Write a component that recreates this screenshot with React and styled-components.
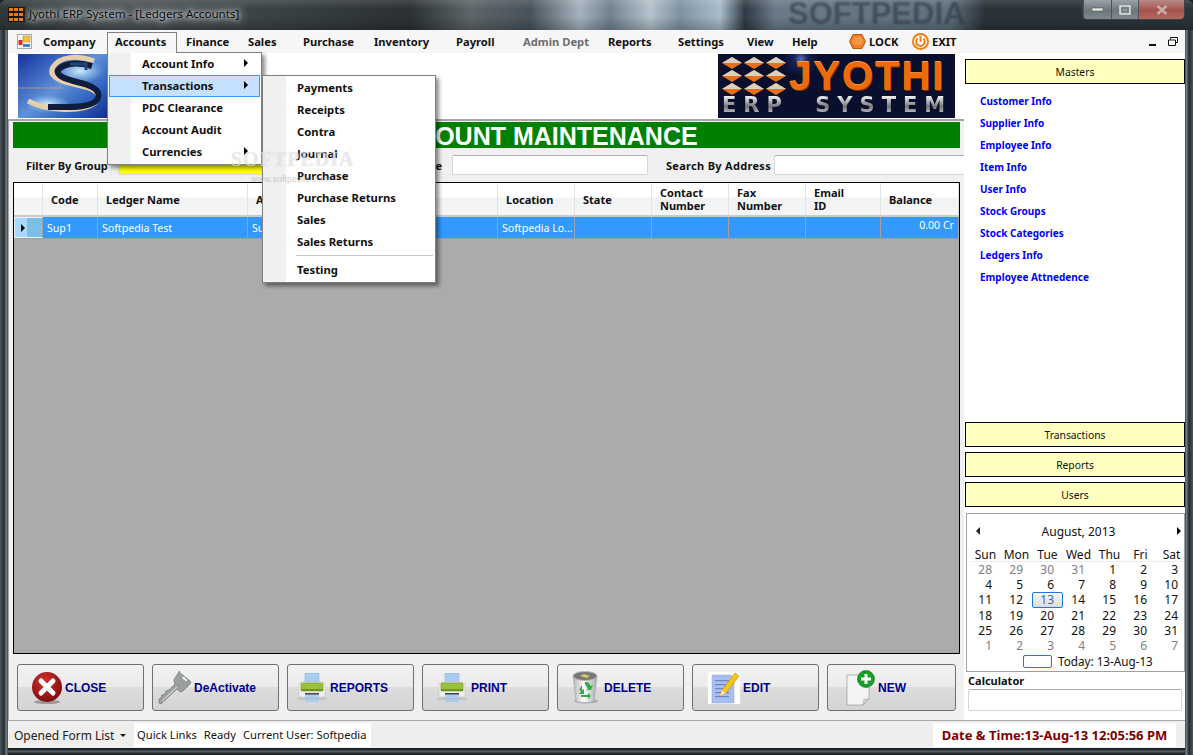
import React from 'react';
import styled, { createGlobalStyle } from 'styled-components';

const GlobalStyle = createGlobalStyle`
    html, body { margin: 0; padding: 0; background: #1c2226; }
    * { box-sizing: border-box; }
`;

const UI = '"Noto Sans", "Open Sans", sans-serif';
const BOLD = '"Noto Sans", "DejaVu Sans", sans-serif';

const Win = styled.div`
    position: relative;
    width: 1193px;
    height: 755px;
    overflow: hidden;
    display: flex;
    flex-direction: column;
    background: linear-gradient(90deg, #4c565c 0, #242b2f 4px, #7d8a90 7px, #20262a 8px, #20262a 1185px, #7d8a90 1186px, #242b2f 1189px, #4c565c 1193px);
    border-radius: 6px 6px 0 0;
`;

const BottomFrame = styled.div`
    position: absolute;
    left: 8px;
    right: 8px;
    bottom: 0;
    height: 7px;
    background: linear-gradient(180deg, #1a1f22 0, #20262a 2px, #5d6b72 3px, #2c3438 5px, #14181a 7px);
`;

const TitleBar = styled.div`
    height: 30px;
    flex: none;
    display: flex;
    align-items: flex-start;
    padding-left: 8px;
    background:
        linear-gradient(180deg, rgba(255,255,255,0.12) 0, rgba(255,255,255,0) 30%, rgba(0,0,0,0) 55%, rgba(0,0,0,0.22) 100%),
        linear-gradient(90deg, #2e3638 0, #4a5154 120px, #3d4447 250px, #2a3034 410px, #5e6569 470px, #48525a 530px, #a5b3bf 580px, #71818e 610px, #b4c2cc 650px, #7f92a2 680px, #a8bccc 720px, #2e3a44 745px, #6a7a88 775px, #60707c 950px, #2a3238 985px, #2c3439 1193px);
`;

const AppIconSvg = styled.svg`
    margin-top: 7px;
    flex: none;
`;

const TitleText = styled.span`
    margin: 6px 0 0 4px;
    font: 11.6px ${UI};
    color: #0c0e10;
    text-shadow: 0 0 5px rgba(255,255,255,0.95), 0 0 9px rgba(255,255,255,0.85), 0 0 14px rgba(255,255,255,0.7);
`;

const WinButtons = styled.div`
    margin-left: auto;
    margin-right: 8px;
    display: flex;
    height: 20px;
    border: 1px solid #3b4248;
    border-top: none;
    border-radius: 0 0 5px 5px;
    overflow: hidden;
    z-index: 7;
`;

const WinButton = styled.div`
    width: ${p => p.$w}px;
    display: flex;
    align-items: center;
    justify-content: center;
    border-left: 1px solid #4a5157;
    background: ${p => p.$close
        ? 'linear-gradient(180deg, #b58a86, #a6524c 55%, #b26a62)'
        : 'linear-gradient(180deg, #9aa3a8, #6d767c 55%, #7f888c)'};
`;

const Client = styled.div`
    flex: 1;
    margin: 0 8px 7px;
    display: flex;
    flex-direction: column;
    min-height: 0;
    background: #fff;
`;

const MenuBar = styled.div`
    height: 23px;
    flex: none;
    display: flex;
    align-items: center;
    padding-left: 9px;
    background: #f6f6f6;
`;

const MenuLogoSvg = styled.svg`
    flex: none;
    margin-right: 9px;
`;

const MenuItem = styled.div`
    width: ${p => p.$w}px;
    flex: none;
    display: flex;
    align-items: center;
    gap: 3px;
    font: bold 11.2px ${BOLD};
    color: ${p => p.$muted ? '#6d6d6d' : '#111'};
    white-space: nowrap;
`;

const MdiControls = styled.div`
    margin-left: auto;
    margin-right: 7px;
    display: flex;
    align-items: center;
    gap: 12px;
`;

const Body = styled.div`
    flex: 1;
    display: flex;
    min-height: 0;
`;

const MainCol = styled.div`
    width: 956px;
    flex: none;
    display: flex;
    flex-direction: column;
`;

const Banner = styled.div`
    height: 66px;
    flex: none;
    display: flex;
    justify-content: space-between;
    align-items: flex-start;
    padding: 1px 9px 0 10px;
    background: #fff;
`;

const SLogo = styled.svg`
    width: 100px;
    height: 64px;
    display: block;
`;

const JyothiLogo = styled.div`
    width: 237px;
    height: 64px;
    display: flex;
    flex-direction: column;
    background: radial-gradient(circle at 83px 5px, #5a70b8 0, #1a2358 7px, #0a0f2e 18px), #0a0f2e;
    overflow: hidden;
`;

const LogoTop = styled.div`
    display: flex;
    align-items: center;
    height: 41px;
    padding: 3px 0 0 4px;
    gap: 1px;
`;

const LogoName = styled.span`
    font: bold 40px/36px "Liberation Sans", sans-serif;
    letter-spacing: 2px;
    color: #ee6a0a;
    text-shadow: 0 -1px 0 #ffa040, 1px 1px 0 #7a3000;
`;

const LogoSub = styled.span`
    font: bold 21px/21px "DejaVu Sans", sans-serif;
    letter-spacing: 7px;
    word-spacing: 12px;
    white-space: nowrap;
    padding-left: 4px;
    background: linear-gradient(180deg, #fff, #777 55%, #ddd);
    -webkit-background-clip: text;
    background-clip: text;
    -webkit-text-fill-color: transparent;
`;

const Panel = styled.div`
    flex: 1;
    display: flex;
    flex-direction: column;
    padding: 1px 4px 9px 4px;
    background: #f0f0f0;
    border-top: 2px solid #a5a5a5;
    border-left: 1px solid #a5a5a5;
`;

const Heading = styled.div`
    height: 26px;
    flex: none;
    display: flex;
    align-items: center;
    padding: 3px 0 0 368px;
    background: #008000;
    color: #fff;
    font: bold 25px "Liberation Sans", sans-serif;
`;

const FilterRow = styled.div`
    height: 34px;
    flex: none;
    display: flex;
    align-items: center;
    margin-right: -4px;
    padding-left: 13px;
    overflow: hidden;
`;

const FilterLabel = styled.span`
    font: bold 11px ${BOLD};
    letter-spacing: ${p => p.$ls || 0}px;
    color: #111;
    white-space: nowrap;
    width: ${p => p.$w}px;
    flex: none;
    text-align: ${p => p.$right ? 'right' : 'left'};
`;

const FilterInput = styled.div`
    width: ${p => p.$w}px;
    height: 20px;
    flex: none;
    margin: 0 ${p => p.$mr || 0}px 0 ${p => p.$ml || 0}px;
    background: ${p => p.$bg || '#fff'};
    border: 1px solid #d5d8dc;
    border-top-color: #abadb3;
    border-radius: 2px;
`;

const Grid = styled.div`
    height: 472px;
    flex: none;
    display: flex;
    flex-direction: column;
    background: #ababab;
    border: 1px solid #000;
`;

const GridHead = styled.div`
    height: 34px;
    flex: none;
    display: flex;
    background: linear-gradient(180deg, #fff 0, #fff 45%, #f1f2f4 46%, #f4f5f7 100%);
    border-bottom: 2px solid #c8cacc;
`;

const HeadCell = styled.div`
    width: ${p => p.$w}px;
    flex: none;
    display: flex;
    align-items: center;
    padding-left: 8px;
    border-right: 1px solid #e2e3e5;
    font: bold 11px/13px ${BOLD};
    color: #111;
    white-space: pre-line;
`;

const GridRow = styled.div`
    height: 22px;
    flex: none;
    display: flex;
    background: #3399ff;
    border-bottom: 1px solid #a0a0a0;
`;

const RowCell = styled.div`
    width: ${p => p.$w}px;
    flex: none;
    display: flex;
    align-items: ${p => p.$right ? 'flex-start' : 'center'};
    justify-content: ${p => p.$right ? 'flex-end' : 'flex-start'};
    padding: ${p => p.$right ? '1px 4px 0 0' : '0 0 0 4px'};
    border-right: 1px solid #a0a0a0;
    font: 10.6px ${UI};
    color: #fff;
    white-space: nowrap;
    overflow: hidden;
`;

const RowHeader = styled.div`
    width: 29px;
    flex: none;
    display: flex;
    align-items: center;
    padding-left: 6px;
    background: linear-gradient(90deg, #a8d8f8 0, #a8d8f8 45%, #78c0e8 46%, #78c0e8 100%);
    border: 1px solid #e8f4fc;
    border-right: 1px solid #a0a0a0;
`;

const Arrow = styled.span`
    width: 0;
    height: 0;
    border-top: ${p => p.$s || 4}px solid transparent;
    border-bottom: ${p => p.$s || 4}px solid transparent;
    border-left: ${p => p.$s || 4}px solid ${p => p.$c || '#000'};
    display: block;
`;

const ArrowLeft = styled(Arrow)`
    border-left: none;
    border-right: 4px solid #222;
`;

const ActionBar = styled.div`
    margin-top: 10px;
    display: flex;
    gap: 8px;
    padding-left: 4px;
`;

const ActionButton = styled.div`
    width: ${p => p.$w || 127}px;
    height: 47px;
    flex: none;
    display: flex;
    align-items: center;
    gap: ${p => p.$gap}px;
    padding-left: ${p => p.$left}px;
    background: linear-gradient(180deg, #f2f2f2 0, #ebebeb 48%, #dddddd 49%, #d3d3d3 100%);
    border: 1px solid #707070;
    border-radius: 3px;
    font: bold 12px "Liberation Sans", sans-serif;
    color: #00008b;
`;

const Side = styled.div`
    width: 221px;
    flex: none;
    display: flex;
    flex-direction: column;
    padding: 6px 0 9px 1px;
    background: #fff;
    overflow: hidden;
`;

const SideButton = styled.div`
    height: 25px;
    flex: none;
    display: flex;
    align-items: center;
    justify-content: center;
    margin-bottom: ${p => p.$mb ?? 5}px;
    background: #ffffc0;
    border: 1px solid #000;
    font: 10.3px ${UI};
    color: #111;
`;

const SideLinks = styled.div`
    flex: 1;
    padding: 6px 0 0 15px;
    display: flex;
    flex-direction: column;
`;

const SideLink = styled.div`
    height: 22px;
    display: flex;
    align-items: center;
    font: bold 10px ${BOLD};
    color: #0000ff;
`;

const Calendar = styled.div`
    height: 159px;
    margin: 1px 0 0 1px;
    flex: none;
    display: flex;
    flex-direction: column;
    border: 1px solid #a0a0a0;
    font: 12px ${UI};
    color: #111;
    overflow: hidden;
`;

const CalHead = styled.div`
    display: flex;
    align-items: center;
    justify-content: space-between;
    height: 20px;
    margin-top: 7px;
    padding: 0 3px 0 9px;
`;

const CalWeek = styled.div`
    display: grid;
    grid-template-columns: repeat(7, 31px);
    margin: 2px 0 0 3px;
    height: 19px;
    padding-top: 3px;
    align-items: center;
    text-align: center;
    border-bottom: 1px solid #eeeeee;
    font-size: 12px;
`;

const CalDays = styled.div`
    display: grid;
    grid-template-columns: repeat(7, 31px);
    grid-auto-rows: 15.2px;
    margin: 0 0 0 3px;
`;

const CalDay = styled.div`
    display: flex;
    align-items: center;
    justify-content: flex-end;
    padding-right: ${p => p.$sel ? '8px' : '9px'};
    line-height: 15px;
    color: ${p => p.$sel ? '#3a6ea5' : p.$off ? '#808080' : '#111'};
    ${p => p.$sel && `
        background: linear-gradient(180deg, #f8f8f8, #dcdcdc);
        border: 1px solid #1a78e0;
        border-radius: 2px;
    `}
`;

const CalToday = styled.div`
    display: flex;
    align-items: center;
    gap: 6px;
    margin: 0 0 0 56px;
    font-size: 11.7px;
`;

const TodayBox = styled.span`
    width: 29px;
    height: 13px;
    border: 1px solid #1a78e0;
    border-radius: 2px;
`;

const CalcLabel = styled.div`
    margin: 2px 0 1px 3px;
    font: bold 11px/14px ${BOLD};
    color: #111;
`;

const CalcInput = styled.div`
    height: 22px;
    margin: 0 3px;
    flex: none;
    border: 1px solid #d5d8dc;
    border-top-color: #abadb3;
    border-radius: 2px;
`;

const StatusBar = styled.div`
    height: 28px;
    flex: none;
    display: flex;
    align-items: center;
    background: #f0eded;
    border-top: 1px solid #a8a8a8;
`;

const FormList = styled.div`
    width: 126px;
    flex: none;
    display: flex;
    align-items: center;
    gap: 6px;
    padding: 2px 0 0 6px;
    font: 12px ${UI};
    color: #222;
    white-space: nowrap;
`;

const CaretDown = styled.span`
    width: 0;
    height: 0;
    border-left: 3px solid transparent;
    border-right: 3px solid transparent;
    border-top: 3px solid #111;
`;

const StatusLinks = styled.div`
    height: 24px;
    display: flex;
    align-items: center;
    gap: 7px;
    padding: 0 4px 0 3px;
    background: #fff;
    font: 11.2px ${UI};
    color: #111;
    white-space: nowrap;
`;

const DateBox = styled.div`
    margin-left: auto;
    margin-right: 9px;
    width: 243px;
    height: 24px;
    display: flex;
    align-items: center;
    justify-content: center;
    background: #fff;
    font: bold 13px ${BOLD};
    color: #800000;
    white-space: nowrap;
`;

const Dropdown = styled.div`
    position: absolute;
    left: ${p => p.$x}px;
    top: ${p => p.$y}px;
    width: ${p => p.$w}px;
    height: ${p => p.$h}px;
    padding: ${p => p.$pt}px 1px 0;
    background: linear-gradient(90deg, #f0f0f0 0, #f0f0f0 ${p => p.$gutter - 2}px, #fff ${p => p.$gutter}px);
    border: 1px solid #808080;
    box-shadow: 3px 3px 4px rgba(0, 0, 0, 0.45);
    z-index: ${p => p.$z};
`;

const DropItem = styled.div`
    height: 22px;
    display: flex;
    align-items: center;
    justify-content: space-between;
    padding: 0 11px 2px 32px;
    font: bold 11.3px ${BOLD};
    color: #111;
    border: 1px solid ${p => p.$active ? '#3399ff' : 'transparent'};
    background: ${p => p.$active ? '#c4e0fc' : 'transparent'};
`;

const DropSep = styled.div`
    height: 1px;
    margin: 2px 1px 3px 32px;
    background: #c8c8c8;
`;

const ActiveTab = styled.div`
    position: absolute;
    left: 107px;
    top: 32px;
    width: 70px;
    height: 21px;
    display: flex;
    align-items: center;
    padding: 0 0 3px 7px;
    background: #f6f6f6;
    border: 1px solid #808080;
    border-bottom: none;
    font: bold 11.2px ${BOLD};
    color: #111;
    z-index: 4;
`;

const Watermark = styled.div`
    position: absolute;
    left: ${p => p.$x}px;
    top: ${p => p.$y}px;
    font: ${p => p.$font};
    color: ${p => p.$c};
    letter-spacing: ${p => p.$ls || 0}px;
    text-shadow: ${p => p.$shadow || 'none'};
    filter: ${p => p.$blur ? `blur(${p.$blur}px)` : 'none'};
    white-space: nowrap;
    pointer-events: none;
    z-index: 6;
`;

const menuItems = [
    ['Company', 72], ['Accounts', 71], ['Finance', 62], ['Sales', 55], ['Purchase', 71], ['Inventory', 82],
    ['Payroll', 67], ['Admin Dept', 85, true], ['Reports', 70], ['Settings', 69], ['View', 45], ['Help', 57],
];

const gridCols = [
    ['Code', 55, 'Sup1'], ['Ledger Name', 150, 'Softpedia Test'], ['Account Type', 100, 'Supplier'], ['Address', 150, ''],
    ['Location', 77, 'Softpedia Lo...'], ['State', 77, ''], ['Contact\nNumber', 77, ''], ['Fax\nNumber', 77, ''],
    ['Email\nID', 75, ''],
];

const masterLinks = ['Customer Info', 'Supplier Info', 'Employee Info', 'Item Info', 'User Info', 'Stock Groups', 'Stock Categories', 'Ledgers Info', 'Employee Attnedence'];

const calendarDays = [
    [28, 1], [29, 1], [30, 1], [31, 1], [1], [2], [3],
    [4], [5], [6], [7], [8], [9], [10],
    [11], [12], [13, 0, 1], [14], [15], [16], [17],
    [18], [19], [20], [21], [22], [23], [24],
    [25], [26], [27], [28], [29], [30], [31],
    [1, 1], [2, 1], [3, 1], [4, 1], [5, 1], [6, 1], [7, 1],
];

const AppIcon = () => (
    <AppIconSvg width="17" height="15" viewBox="0 0 17 15">
        <rect width="17" height="15" fill="#1c1410" />
        {[1, 6, 11].map(x => [1, 6, 11].map(y => (
            <rect key={x + '-' + y} x={x} y={y} width="4" height="3" fill="#e9781a" />
        )))}
    </AppIconSvg>
);

const MenuLogo = () => (
    <MenuLogoSvg width="17" height="15" viewBox="0 0 17 15">
        <rect x="0.5" y="0.5" width="14" height="14" fill="#f4f4f4" stroke="#aaa" />
        <rect x="1.5" y="6" width="4" height="5" fill="#e02a20" />
        <rect x="6" y="2" width="7" height="6" fill="#f5c242" stroke="#c08a10" strokeWidth="0.5" />
        <rect x="6" y="10" width="7" height="3" fill="#4a7fd0" />
    </MenuLogoSvg>
);

const LockIcon = () => (
    <svg width="17" height="15" viewBox="0 0 17 15">
        <polygon points="4,0.5 13,0.5 16.5,7.5 13,14.5 4,14.5 0.5,7.5" fill="#ef7d22" stroke="#c4560c" />
        <polygon points="5,3 12,3 14,7 12,11 5,11 3,7" fill="#f79646" />
    </svg>
);

const ExitIcon = () => (
    <svg width="17" height="17" viewBox="0 0 17 17">
        <circle cx="8.5" cy="8.5" r="7.5" fill="#fff" stroke="#ef7d12" strokeWidth="2" />
        <path d="M5.6 5.5a4.3 4.3 0 1 0 5.8 0" fill="none" stroke="#ef7d12" strokeWidth="2" />
        <path d="M8.5 3v6" stroke="#ef7d12" strokeWidth="2" />
    </svg>
);

const CloseIcon = () => (
    <svg width="32" height="34" viewBox="0 0 32 34">
        <defs>
            <radialGradient id="redBall" cx="40%" cy="30%" r="75%">
                <stop offset="0" stopColor="#d0302c" />
                <stop offset="1" stopColor="#7a0c0c" />
            </radialGradient>
        </defs>
        <ellipse cx="16" cy="31" rx="13" ry="2" fill="#999" />
        <circle cx="16" cy="16" r="15" fill="url(#redBall)" />
        <path d="M10 10l12 12M22 10L10 22" stroke="#fff" strokeWidth="5" strokeLinecap="round" />
    </svg>
);

const KeyIcon = () => (
    <svg width="34" height="34" viewBox="0 0 34 34">
        <path d="M21 1l11 9c1 1 1 2 0 3l-7 7c-1 1-3 1-4 0l-2-2L5 31l-2 2-2-1v-4l2-1 1-3 3-1 1-3 3-1 6-6-1-3c0-1 0-2 1-3l4-6c0-1 1-1 1-1z" fill="#9aa09c" stroke="#6f7571" strokeWidth="0.7" />
        <rect x="23" y="6" width="7" height="3" rx="1.5" transform="rotate(42 26 8)" fill="#e8eae8" stroke="#7a7f7b" strokeWidth="0.6" />
        <path d="M19 16L4 30" stroke="#c9cdca" strokeWidth="1.4" />
    </svg>
);

const PrinterIcon = () => (
    <svg width="30" height="30" viewBox="0 0 30 30">
        <rect x="8" y="0" width="14" height="12" fill="#a9cdf2" stroke="#8fb2d8" strokeWidth="0.5" />
        <rect x="2" y="9" width="26" height="15" rx="2" fill="#f0f0ee" stroke="#bbb" strokeWidth="0.5" />
        <rect x="4" y="10" width="22" height="8" rx="1" fill="#9bc23c" stroke="#6f9420" strokeWidth="0.6" />
        <rect x="4" y="16" width="22" height="2" fill="#6f9420" />
        <rect x="8" y="20" width="14" height="9" fill="#a9cdf2" />
        <rect x="8" y="20" width="14" height="1.5" fill="#444" />
        <rect x="0" y="25" width="30" height="1.4" fill="#bbb" />
    </svg>
);

const RecycleIcon = () => (
    <svg width="26" height="33" viewBox="0 0 26 33">
        <defs>
            <linearGradient id="binSide" x1="0" x2="1" y1="0" y2="0">
                <stop offset="0" stopColor="#b4b4b4" />
                <stop offset="0.45" stopColor="#fdfdfd" />
                <stop offset="1" stopColor="#a8a8a8" />
            </linearGradient>
        </defs>
        <ellipse cx="14" cy="30" rx="12" ry="2.4" fill="#aaa" />
        <path d="M1 5l3 25c1 2 17 2 18 0l3-25z" fill="url(#binSide)" stroke="#999" strokeWidth="0.5" />
        <ellipse cx="13" cy="5" rx="12" ry="4.5" fill="#777" stroke="#bbb" />
        <path d="M8 5l4-2 6 2-3 2z" fill="#d8c860" />
        <path d="M13 13l3 5-2 1 5 0 2-5-2 1-3-4h-3zM10 14l-3 5 2 1-2 3h5v-5l-2 1zM9 24h7v-2l3 3-3 3v-2H9z" fill="#35a84a" />
    </svg>
);

const EditIcon = () => (
    <svg width="32" height="32" viewBox="0 0 32 32">
        <rect width="32" height="32" fill="#fff" />
        <path d="M4 3h19l3 3v25H4z" fill="#a8bdf0" stroke="#90a4d8" strokeWidth="0.5" />
        {[8, 12, 16, 20, 24].map(y => <rect key={y} x="7" y={y} width="14" height="1.2" fill="#7085c0" />)}
        <path d="M27 1l4 3-13 17-6 3 2-6z" fill="#f5c518" stroke="#c49200" strokeWidth="0.6" />
        <path d="M12 24l2-6 4 3z" fill="#fbe7b0" />
    </svg>
);

const NewIcon = () => (
    <svg width="30" height="36" viewBox="0 0 30 36">
        <path d="M1 5h22v24l-6 6H1z" fill="#f4f4f4" stroke="#999" strokeWidth="0.7" />
        <path d="M17 35l1-6 5 0z" fill="#d4d4d4" stroke="#999" strokeWidth="0.5" />
        <circle cx="20" cy="9" r="8.5" fill="#16a02a" stroke="#0c6a18" strokeWidth="0.6" />
        <path d="M20 4v10M15 9h10" stroke="#fff" strokeWidth="3" />
    </svg>
);

const actionButtons = [
    ['CLOSE', CloseIcon, 13, 2, 127],
    ['DeActivate', KeyIcon, 5, 2, 127],
    ['REPORTS', PrinterIcon, 9, 3, 127],
    ['PRINT', PrinterIcon, 14, 4, 127],
    ['DELETE', RecycleIcon, 14, 6, 127],
    ['EDIT', EditIcon, 15, 3, 127],
    ['NEW', NewIcon, 18, 2, 129],
];

export default function App () {
    return (
        <Win>
            <GlobalStyle />
            <TitleBar>
                <AppIcon />
                <TitleText>Jyothi ERP System - [Ledgers Accounts]</TitleText>
                <WinButtons>
                    <WinButton $w={28}>
                        <svg width="12" height="5"><rect width="11" height="3" y="1" fill="#e8e8e8" stroke="#444" strokeWidth="0.5" /></svg>
                    </WinButton>
                    <WinButton $w={27}>
                        <svg width="12" height="10"><rect x="1" y="1" width="10" height="8" fill="#8f989c" stroke="#e0e0e0" strokeWidth="1.5" /><rect x="3" y="3" width="6" height="4" fill="none" stroke="#444" strokeWidth="0.5" /></svg>
                    </WinButton>
                    <WinButton $w={46} $close>
                        <svg width="12" height="10"><path d="M1.500 1l9 8M10.500 1l-9 8" stroke="#c9b0aa" strokeWidth="2.400" /></svg>
                    </WinButton>
                </WinButtons>
            </TitleBar>

            <Client>
                <MenuBar>
                    <MenuLogo />
                    {menuItems.map(([label, w, muted]) => (
                        <MenuItem key={label} $w={w} $muted={muted}>{label}</MenuItem>
                    ))}
                    <MenuItem $w={63}><LockIcon />LOCK</MenuItem>
                    <MenuItem $w={60}><ExitIcon />EXIT</MenuItem>
                    <MdiControls>
                        <svg width="7" height="9"><rect y="7" width="7" height="2" fill="#111" /></svg>
                        <svg width="10" height="9"><path d="M2.500 2.500V.5h7v5h-2M.5 3h7v5.500h-7z" fill="#fff" stroke="#111" /></svg>
                    </MdiControls>
                </MenuBar>

                <Body>
                    <MainCol>
                        <Banner>
                            <SLogo viewBox="0 0 100 64">
                                <defs>
                                    <linearGradient id="sBack" x1="0" x2="1" y1="0.1" y2="0.9">
                                        <stop offset="0" stopColor="#1a3aa6" />
                                        <stop offset="0.45" stopColor="#5f92d8" />
                                        <stop offset="0.75" stopColor="#2c5cbc" />
                                        <stop offset="1" stopColor="#12288c" />
                                    </linearGradient>
                                    <radialGradient id="sGlow" cx="0.5" cy="0.5" r="0.5">
                                        <stop offset="0" stopColor="#d4f0fa" stopOpacity="0.95" />
                                        <stop offset="1" stopColor="#9fd0f0" stopOpacity="0" />
                                    </radialGradient>
                                </defs>
                                <rect width="100" height="64" fill="url(#sBack)" />
                                <ellipse cx="62" cy="17" rx="24" ry="12" fill="url(#sGlow)" />
                                <ellipse cx="30" cy="50" rx="22" ry="9" fill="url(#sGlow)" />
                                <path d="M0 34H45" stroke="#c8a890" strokeWidth="0.8" strokeDasharray="3 1" />
                                <path d="M76 7C60 1 42 2 35 13c-5 9 6 14 20 17 14 3 27 6 25 14-2 9-20 13-40 11-12-1-22-4-30-8" fill="none" stroke="#e8cfa8" strokeWidth="5" />
                                <path d="M74 12C60 8 47 9 41 15c-5 6 6 10 18 13 14 3 24 8 21 16-3 7-16 9-30 9H30" fill="none" stroke="#101c3c" strokeWidth="6" />
                                <path d="M52 10h16v6" fill="none" stroke="#1d4a78" strokeWidth="3" />
                            </SLogo>
                            <JyothiLogo>
                                <LogoTop>
                                    <svg width="66" height="38" viewBox="0 0 66 38">
                                        {[0, 1, 2].map(r => [0, 1, 2].map(c => (
                                            <g key={r + '-' + c} transform={`translate(${c * 22} ${r * 13})`}>
                                                <polygon points="0,6 10,0 20,6 10,12" fill="#e8701a" />
                                                <polygon points="0,6 10,0 20,6 10,6" fill="#d8d0c0" />
                                            </g>
                                        )))}
                                    </svg>
                                    <LogoName>JYOTHI</LogoName>
                                </LogoTop>
                                <LogoSub>ERP SYSTEM</LogoSub>
                            </JyothiLogo>
                        </Banner>

                        <Panel>
                            <Heading>ACCOUNT MAINTENANCE</Heading>
                            <FilterRow>
                                <FilterLabel $w={92}>Filter By Group</FilterLabel>
                                <FilterInput $w={230} $bg="#ffff00" />
                                <FilterLabel $w={94} $right>Search By Name</FilterLabel>
                                <FilterInput $w={196} $ml={10} $mr={18} />
                                <FilterLabel $w={107} $ls={0.3}>Search By Address</FilterLabel>
                                <FilterInput $w={195} $ml={1} />
                            </FilterRow>
                            <Grid>
                                <GridHead>
                                    <HeadCell $w={29} />
                                    {gridCols.map(([label, w]) => (
                                        <HeadCell key={label} $w={w}>{label}</HeadCell>
                                    ))}
                                    <HeadCell $w={78}>Balance</HeadCell>
                                </GridHead>
                                <GridRow>
                                    <RowHeader><Arrow /></RowHeader>
                                    {gridCols.map(([label, w, value]) => (
                                        <RowCell key={label} $w={w}>{value}</RowCell>
                                    ))}
                                    <RowCell $w={78} $right>0.00 Cr</RowCell>
                                </GridRow>
                            </Grid>
                            <ActionBar>
                                {actionButtons.map(([label, Icon, left, gap, w]) => (
                                    <ActionButton key={label} $left={left} $gap={gap} $w={w}>
                                        <Icon />{label}
                                    </ActionButton>
                                ))}
                            </ActionBar>
                        </Panel>
                    </MainCol>

                    <Side>
                        <SideButton $mb={0}>Masters</SideButton>
                        <SideLinks>
                            {masterLinks.map(link => <SideLink key={link}>{link}</SideLink>)}
                        </SideLinks>
                        <SideButton>Transactions</SideButton>
                        <SideButton>Reports</SideButton>
                        <SideButton>Users</SideButton>
                        <Calendar>
                            <CalHead>
                                <ArrowLeft />
                                <span>August, 2013</span>
                                <Arrow />
                            </CalHead>
                            <CalWeek>
                                {['Sun', 'Mon', 'Tue', 'Wed', 'Thu', 'Fri', 'Sat'].map(d => <span key={d}>{d}</span>)}
                            </CalWeek>
                            <CalDays>
                                {calendarDays.map(([n, off, sel], i) => (
                                    <CalDay key={i} $off={off} $sel={sel}>{n}</CalDay>
                                ))}
                            </CalDays>
                            <CalToday><TodayBox />Today: 13-Aug-13</CalToday>
                        </Calendar>
                        <CalcLabel>Calculator</CalcLabel>
                        <CalcInput />
                    </Side>
                </Body>

                <StatusBar>
                    <FormList>Opened Form List<CaretDown /></FormList>
                    <StatusLinks>
                        <span>Quick Links</span>
                        <span>Ready</span>
                        <span>Current User: Softpedia</span>
                    </StatusLinks>
                    <DateBox>Date &amp; Time:13-Aug-13 12:05:56 PM</DateBox>
                </StatusBar>
            </Client>
            <BottomFrame />

            <ActiveTab>Accounts</ActiveTab>
            <Dropdown $x={107} $y={52} $w={155} $h={113} $pt={0} $gutter={24} $z={3}>
                <DropItem>Account Info<Arrow $s={4} /></DropItem>
                <DropItem $active>Transactions<Arrow $s={4} /></DropItem>
                <DropItem>PDC Clearance</DropItem>
                <DropItem>Account Audit</DropItem>
                <DropItem>Currencies<Arrow $s={4} /></DropItem>
            </Dropdown>
            <Dropdown $x={262} $y={75} $w={174} $h={208} $pt={1} $gutter={24} $z={5}>
                <DropItem>Payments</DropItem>
                <DropItem>Receipts</DropItem>
                <DropItem>Contra</DropItem>
                <DropItem>Journal</DropItem>
                <DropItem>Purchase</DropItem>
                <DropItem>Purchase Returns</DropItem>
                <DropItem>Sales</DropItem>
                <DropItem>Sales Returns</DropItem>
                <DropSep />
                <DropItem>Testing</DropItem>
            </Dropdown>

            <Watermark $x={231} $y={148} $font={'bold 20px "Liberation Serif", serif'} $c="rgba(255,255,255,0.55)" $ls={1} $shadow="0 0 1px rgba(120,120,120,0.35)">SOFTPEDIA</Watermark>
            <Watermark $x={251} $y={174} $font={'9px "Liberation Sans", sans-serif'} $c="rgba(170,170,170,0.6)">www.softpedia.com</Watermark>
            <Watermark $x={788} $y={-4} $font={'bold 31px "Liberation Sans", sans-serif'} $c="rgba(40,55,66,0.6)" $blur={1}>SOFTPEDIA</Watermark>
        </Win>
    );
}
